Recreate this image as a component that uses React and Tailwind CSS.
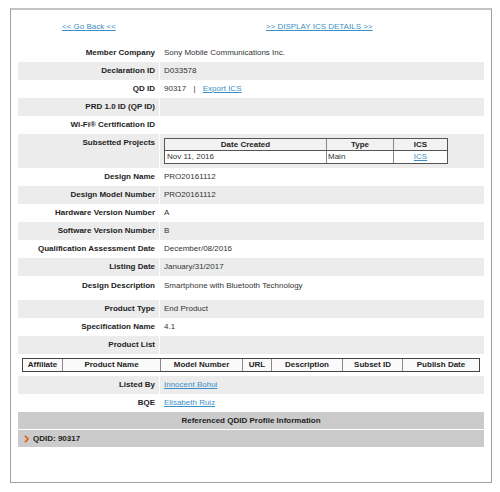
import React from 'react';

const rows = [
  { label: 'Member Company', value: 'Sony Mobile Communications Inc.' },
  { label: 'Declaration ID', value: 'D033578', gray: true },
  { label: 'QD ID', value: 'qdid' },
  { label: 'PRD 1.0 ID (QP ID)', value: '', gray: true },
  { label: 'Wi-Fi® Certification ID', value: '' },
];

const rows2 = [
  { label: 'Design Name', value: 'PRO20161112' },
  { label: 'Design Model Number', value: 'PRO20161112', gray: true },
  { label: 'Hardware Version Number', value: 'A' },
  { label: 'Software Version Number', value: 'B', gray: true },
  { label: 'Qualification Assessment Date', value: 'December/08/2016' },
  { label: 'Listing Date', value: 'January/31/2017', gray: true },
];

const rows3 = [
  { label: 'Product Type', value: 'End Product', gray: true },
  { label: 'Specification Name', value: '4.1' },
  { label: 'Product List', value: '', gray: true },
];

const productCols = [
  { name: 'Affiliate', w: 'w-[40px]' },
  { name: 'Product Name', w: 'w-[98px]' },
  { name: 'Model Number', w: 'w-[82px]' },
  { name: 'URL', w: 'w-[29px]' },
  { name: 'Description', w: 'w-[71px]' },
  { name: 'Subset ID', w: 'w-[60px]' },
  { name: 'Publish Date', w: 'flex-1' },
];

const Link = ({ children }) => (
  <a href="#" className="text-[#3b8fc6] underline">{children}</a>
);

const Row = ({ label, gray, h = 'h-[18px]', items = 'items-center', children }) => (
  <div className={`flex ${h} ${gray ? 'bg-[#ececec]' : 'bg-white'}`}>
    <div className={`w-[142px] flex ${items} justify-end pr-[4px] font-bold text-[#222] border-r border-white`}>
      {label}
    </div>
    <div className={`flex-1 flex ${items} pl-[4px] text-[#333]`}>{children}</div>
  </div>
);

export default function App() {
  return (
    <div className="w-[500px] h-[492px] bg-white pt-[8px] pl-[10px] font-['Liberation_Sans',Arial,sans-serif] text-[8px] leading-none">
      <div className="w-[482px] h-[475px] border border-[#a0a0a0] border-t-2 border-t-[#c4c4c4] px-[7px]">
        <div className="flex h-[34px] items-center">
          <div className="w-[44px]" />
          <Link>{'<< Go Back <<'}</Link>
          <div className="w-[150px]" />
          <Link>{'>> DISPLAY ICS DETAILS >>'}</Link>
        </div>

        {rows.map((r) => (
          <Row key={r.label} label={r.label} gray={r.gray}>
            {r.value === 'qdid' ? (
              <span>
                90317 <span className="mx-[5px]">|</span> <Link>Export ICS</Link>
              </span>
            ) : (
              r.value
            )}
          </Row>
        ))}

        <Row label="Subsetted Projects" gray h="h-[34px]" items="items-start pt-[5px]">
          <div className="w-[284px] border border-[#555] bg-white -mt-[1px]">
            <div className="flex h-[12px] bg-[#f2f2f2] border-b border-[#555] font-bold text-[#222]">
              <div className="w-[162px] flex items-center justify-center border-r border-[#888]">Date Created</div>
              <div className="w-[67px] flex items-center justify-center border-r border-[#888]">Type</div>
              <div className="flex-1 flex items-center justify-center">ICS</div>
            </div>
            <div className="flex h-[12px]">
              <div className="w-[162px] flex items-center pl-[2px] border-r border-[#888]">Nov 11, 2016</div>
              <div className="w-[67px] flex items-center pl-[1px] border-r border-[#888]">Main</div>
              <div className="flex-1 flex items-center justify-center"><Link>ICS</Link></div>
            </div>
          </div>
        </Row>

        {rows2.map((r) => (
          <Row key={r.label} label={r.label} gray={r.gray}>{r.value}</Row>
        ))}

        <Row label="Design Description" h="h-[24px]" items="items-start pt-[6px]">
          Smartphone with Bluetooth Technology
        </Row>

        {rows3.map((r) => (
          <Row key={r.label} label={r.label} gray={r.gray}>{r.value}</Row>
        ))}

        <div className="h-[22px] pt-[4px] px-[4px] bg-white">
          <div className="flex h-[14px] border border-[#444] font-bold text-[#222] bg-[#fafafa]">
            {productCols.map((c, i) => (
              <div
                key={c.name}
                className={`${c.w} flex items-center justify-center ${i < productCols.length - 1 ? 'border-r border-[#888]' : ''}`}
              >
                {c.name}
              </div>
            ))}
          </div>
        </div>

        <Row label="Listed By" gray><Link>Innocent Bohui</Link></Row>
        <Row label="BQE"><Link>Elisabeth Ruiz</Link></Row>

        <div className="h-[18px] bg-[#cbcbcb] flex items-center justify-center font-bold text-[#222] border-b border-white">
          Referenced QDID Profile Information
        </div>
        <div className="h-[17px] bg-[#cbcbcb] flex items-center pl-[6px] gap-[4px] font-bold text-[#222]">
          <svg width="5" height="8" viewBox="0 0 5 8">
            <path d="M1 0.8 L4 4 L1 7.2" fill="none" stroke="#e8601c" strokeWidth="1.8" />
          </svg>
          QDID: 90317
        </div>
      </div>
    </div>
  );
}
